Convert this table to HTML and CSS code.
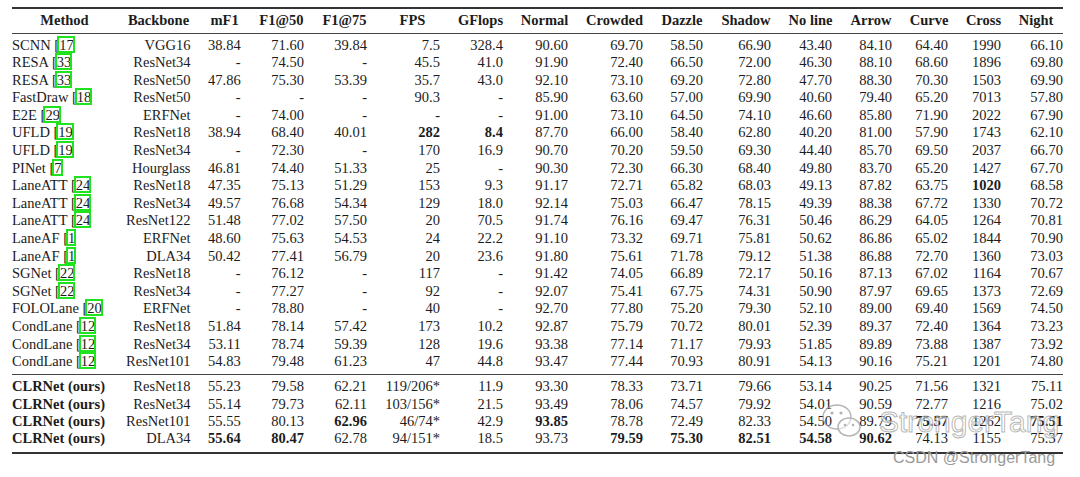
FILE: index.html
```html
<!DOCTYPE html>
<html>
<head>
<meta charset="utf-8">
<link rel="stylesheet" href="styles.css">
</head>
<body>
<div class="table">
  <div class="row head">
    <span class="hm">Method</span><span class="hb">Backbone</span><span>mF1</span><span>F1@50</span><span>F1@75</span><span>FPS</span><span>GFlops</span><span>Normal</span><span>Crowded</span><span>Dazzle</span><span>Shadow</span><span>No line</span><span>Arrow</span><span>Curve</span><span>Cross</span><span class="hn">Night</span>
  </div>
  <div class="group">
    <div class="row"><span class="m">SCNN [<span class="cite">17</span></span><span>VGG16</span><span>38.84</span><span>71.60</span><span>39.84</span><span>7.5</span><span>328.4</span><span>90.60</span><span>69.70</span><span>58.50</span><span>66.90</span><span>43.40</span><span>84.10</span><span>64.40</span><span>1990</span><span>66.10</span></div>
    <div class="row"><span class="m">RESA [<span class="cite">33</span></span><span>ResNet34</span><span>-</span><span>74.50</span><span>-</span><span>45.5</span><span>41.0</span><span>91.90</span><span>72.40</span><span>66.50</span><span>72.00</span><span>46.30</span><span>88.10</span><span>68.60</span><span>1896</span><span>69.80</span></div>
    <div class="row"><span class="m">RESA [<span class="cite">33</span></span><span>ResNet50</span><span>47.86</span><span>75.30</span><span>53.39</span><span>35.7</span><span>43.0</span><span>92.10</span><span>73.10</span><span>69.20</span><span>72.80</span><span>47.70</span><span>88.30</span><span>70.30</span><span>1503</span><span>69.90</span></div>
    <div class="row"><span class="m">FastDraw [<span class="cite">18</span></span><span>ResNet50</span><span>-</span><span>-</span><span>-</span><span>90.3</span><span>-</span><span>85.90</span><span>63.60</span><span>57.00</span><span>69.90</span><span>40.60</span><span>79.40</span><span>65.20</span><span>7013</span><span>57.80</span></div>
    <div class="row"><span class="m">E2E [<span class="cite">29</span></span><span>ERFNet</span><span>-</span><span>74.00</span><span>-</span><span>-</span><span>-</span><span>91.00</span><span>73.10</span><span>64.50</span><span>74.10</span><span>46.60</span><span>85.80</span><span>71.90</span><span>2022</span><span>67.90</span></div>
    <div class="row"><span class="m">UFLD [<span class="cite">19</span></span><span>ResNet18</span><span>38.94</span><span>68.40</span><span>40.01</span><span class="b">282</span><span class="b">8.4</span><span>87.70</span><span>66.00</span><span>58.40</span><span>62.80</span><span>40.20</span><span>81.00</span><span>57.90</span><span>1743</span><span>62.10</span></div>
    <div class="row"><span class="m">UFLD [<span class="cite">19</span></span><span>ResNet34</span><span>-</span><span>72.30</span><span>-</span><span>170</span><span>16.9</span><span>90.70</span><span>70.20</span><span>59.50</span><span>69.30</span><span>44.40</span><span>85.70</span><span>69.50</span><span>2037</span><span>66.70</span></div>
    <div class="row"><span class="m">PINet [<span class="cite">7</span></span><span>Hourglass</span><span>46.81</span><span>74.40</span><span>51.33</span><span>25</span><span>-</span><span>90.30</span><span>72.30</span><span>66.30</span><span>68.40</span><span>49.80</span><span>83.70</span><span>65.20</span><span>1427</span><span>67.70</span></div>
    <div class="row"><span class="m">LaneATT [<span class="cite">24</span></span><span>ResNet18</span><span>47.35</span><span>75.13</span><span>51.29</span><span>153</span><span>9.3</span><span>91.17</span><span>72.71</span><span>65.82</span><span>68.03</span><span>49.13</span><span>87.82</span><span>63.75</span><span class="b">1020</span><span>68.58</span></div>
    <div class="row"><span class="m">LaneATT [<span class="cite">24</span></span><span>ResNet34</span><span>49.57</span><span>76.68</span><span>54.34</span><span>129</span><span>18.0</span><span>92.14</span><span>75.03</span><span>66.47</span><span>78.15</span><span>49.39</span><span>88.38</span><span>67.72</span><span>1330</span><span>70.72</span></div>
    <div class="row"><span class="m">LaneATT [<span class="cite">24</span></span><span>ResNet122</span><span>51.48</span><span>77.02</span><span>57.50</span><span>20</span><span>70.5</span><span>91.74</span><span>76.16</span><span>69.47</span><span>76.31</span><span>50.46</span><span>86.29</span><span>64.05</span><span>1264</span><span>70.81</span></div>
    <div class="row"><span class="m">LaneAF [<span class="cite">1</span></span><span>ERFNet</span><span>48.60</span><span>75.63</span><span>54.53</span><span>24</span><span>22.2</span><span>91.10</span><span>73.32</span><span>69.71</span><span>75.81</span><span>50.62</span><span>86.86</span><span>65.02</span><span>1844</span><span>70.90</span></div>
    <div class="row"><span class="m">LaneAF [<span class="cite">1</span></span><span>DLA34</span><span>50.42</span><span>77.41</span><span>56.79</span><span>20</span><span>23.6</span><span>91.80</span><span>75.61</span><span>71.78</span><span>79.12</span><span>51.38</span><span>86.88</span><span>72.70</span><span>1360</span><span>73.03</span></div>
    <div class="row"><span class="m">SGNet [<span class="cite">22</span></span><span>ResNet18</span><span>-</span><span>76.12</span><span>-</span><span>117</span><span>-</span><span>91.42</span><span>74.05</span><span>66.89</span><span>72.17</span><span>50.16</span><span>87.13</span><span>67.02</span><span>1164</span><span>70.67</span></div>
    <div class="row"><span class="m">SGNet [<span class="cite">22</span></span><span>ResNet34</span><span>-</span><span>77.27</span><span>-</span><span>92</span><span>-</span><span>92.07</span><span>75.41</span><span>67.75</span><span>74.31</span><span>50.90</span><span>87.97</span><span>69.65</span><span>1373</span><span>72.69</span></div>
    <div class="row"><span class="m">FOLOLane [<span class="cite">20</span></span><span>ERFNet</span><span>-</span><span>78.80</span><span>-</span><span>40</span><span>-</span><span>92.70</span><span>77.80</span><span>75.20</span><span>79.30</span><span>52.10</span><span>89.00</span><span>69.40</span><span>1569</span><span>74.50</span></div>
    <div class="row"><span class="m">CondLane [<span class="cite">12</span></span><span>ResNet18</span><span>51.84</span><span>78.14</span><span>57.42</span><span>173</span><span>10.2</span><span>92.87</span><span>75.79</span><span>70.72</span><span>80.01</span><span>52.39</span><span>89.37</span><span>72.40</span><span>1364</span><span>73.23</span></div>
    <div class="row"><span class="m">CondLane [<span class="cite">12</span></span><span>ResNet34</span><span>53.11</span><span>78.74</span><span>59.39</span><span>128</span><span>19.6</span><span>93.38</span><span>77.14</span><span>71.17</span><span>79.93</span><span>51.85</span><span>89.89</span><span>73.88</span><span>1387</span><span>73.92</span></div>
    <div class="row"><span class="m">CondLane [<span class="cite">12</span></span><span>ResNet101</span><span>54.83</span><span>79.48</span><span>61.23</span><span>47</span><span>44.8</span><span>93.47</span><span>77.44</span><span>70.93</span><span>80.91</span><span>54.13</span><span>90.16</span><span>75.21</span><span>1201</span><span>74.80</span></div>
  </div>
  <div class="group ours">
    <div class="row"><span class="m b">CLRNet (ours)</span><span>ResNet18</span><span>55.23</span><span>79.58</span><span>62.21</span><span>119/206*</span><span>11.9</span><span>93.30</span><span>78.33</span><span>73.71</span><span>79.66</span><span>53.14</span><span>90.25</span><span>71.56</span><span>1321</span><span>75.11</span></div>
    <div class="row"><span class="m b">CLRNet (ours)</span><span>ResNet34</span><span>55.14</span><span>79.73</span><span>62.11</span><span>103/156*</span><span>21.5</span><span>93.49</span><span>78.06</span><span>74.57</span><span>79.92</span><span>54.01</span><span>90.59</span><span>72.77</span><span>1216</span><span>75.02</span></div>
    <div class="row"><span class="m b">CLRNet (ours)</span><span>ResNet101</span><span>55.55</span><span>80.13</span><span class="b">62.96</span><span>46/74*</span><span>42.9</span><span class="b">93.85</span><span>78.78</span><span>72.49</span><span>82.33</span><span>54.50</span><span>89.79</span><span class="b">75.57</span><span>1262</span><span class="b">75.51</span></div>
    <div class="row"><span class="m b">CLRNet (ours)</span><span>DLA34</span><span class="b">55.64</span><span class="b">80.47</span><span>62.78</span><span>94/151*</span><span>18.5</span><span>93.73</span><span class="b">79.59</span><span class="b">75.30</span><span class="b">82.51</span><span class="b">54.58</span><span class="b">90.62</span><span>74.13</span><span>1155</span><span>75.37</span></div>
  </div>
</div>

<svg class="wm-logo" width="44" height="40" viewBox="0 0 44 40">
  <ellipse cx="17" cy="16" rx="14" ry="12" fill="none" stroke="#9a9a9a" stroke-width="1.4"/>
  <circle cx="12" cy="12" r="1.6" fill="#9a9a9a"/>
  <circle cx="21" cy="12" r="1.6" fill="#9a9a9a"/>
  <ellipse cx="29" cy="26" rx="11" ry="9" fill="rgba(255,255,255,0.5)" stroke="#9a9a9a" stroke-width="1.4"/>
  <circle cx="25" cy="24" r="1.3" fill="#9a9a9a"/>
  <circle cx="33" cy="24" r="1.3" fill="#9a9a9a"/>
</svg>
<div class="wm-text">StrongerTang</div>
<div class="csdn">CSDN @StrongerTang</div>
</body>
</html>
```
FILE: styles.css
```css
html, body {
  margin: 0;
  padding: 0;
  background: #ffffff;
}

body {
  width: 1080px;
  height: 477px;
  overflow: hidden;
  position: relative;
  font-family: "Liberation Serif", "Times New Roman", serif;
  font-size: 14.5px;
  color: #1c1c1c;
}

.table {
  margin: 7px 0 0 12px;
  width: 1051px;
  border-top: 2px solid #333333;
  border-bottom: 2px solid #333333;
}

.row {
  display: grid;
  grid-template-columns: 105px 73.5px 50.2px 63.3px 63px 73px 63px 65px 75px 60px 68px 61px 60px 56px 53px 62px;
  height: 17.6px;
  line-height: 17.6px;
  text-align: right;
  white-space: nowrap;
}

.head {
  height: 24px;
  line-height: 22px;
  font-weight: bold;
  border-bottom: 1px solid #444444;
}

.head span {
  display: flex;
  justify-content: center;
  padding-left: 18px;
}

.head .hm {
  padding-left: 0;
}

.head .hb {
  padding-left: 9.5px;
}

.head .hn {
  padding-left: 8px;
}

.group {
  padding: 2.5px 0 3.5px;
}

.group + .group {
  border-top: 1px solid #444444;
}

.ours {
  padding: 3px 0 4px;
}

.ours .row {
  height: 17.4px;
  line-height: 17.4px;
}

.m {
  text-align: left;
}

.b {
  font-weight: bold;
}

.cite {
  position: relative;
}

.cite::after {
  content: "";
  position: absolute;
  left: -2px;
  right: -1px;
  top: -1px;
  bottom: 0;
  border: 2px solid #1fe31f;
}

.wm-logo {
  position: absolute;
  left: 820px;
  top: 401px;
  opacity: 0.75;
}

.wm-text {
  position: absolute;
  left: 879px;
  top: 404px;
  font-family: "Liberation Sans", Arial, sans-serif;
  font-size: 30px;
  line-height: 36px;
  color: rgba(255, 255, 255, 0.55);
  -webkit-text-stroke: 1px rgba(110, 110, 110, 0.5);
}

.csdn {
  position: absolute;
  left: 893px;
  top: 449px;
  font-family: "Liberation Sans", Arial, sans-serif;
  font-size: 16px;
  line-height: 18px;
  color: #9a9a9a;
}
```
